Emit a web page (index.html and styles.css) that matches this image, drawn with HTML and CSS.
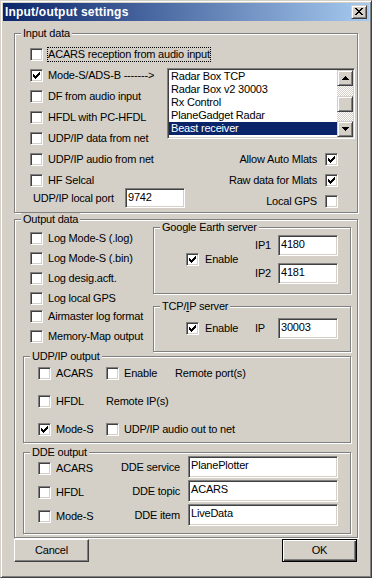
FILE: index.html
```html
<!DOCTYPE html>
<html lang="en">
<head>
    <meta charset="UTF-8">
    <meta name="viewport" content="width=device-width, initial-scale=1.0">
    <title>Input/output settings</title>
    <link rel="stylesheet" href="styles.css">
</head>
<body>
    <svg class="defs" width="0" height="0">
        <symbol id="tick" viewBox="0 0 7 7">
            <path d="M6 0h1v1h-1zM5 1h2v1h-2zM0 2h1v1h-1zM4 2h3v1h-3zM0 3h2v1h-2zM3 3h3v1h-3zM0 4h5v1h-5zM1 5h3v1h-3zM2 6h1v1h-1z"/>
        </symbol>
    </svg>

    <div class="window">
        <div class="titlebar">
            <span class="title">Input/output settings</span>
            <span class="close-btn">
                <svg width="8" height="7" viewBox="0 0 8 7" shape-rendering="crispEdges"><path d="M0 0h2v1h-2zM6 0h2v1h-2zM1 1h2v1h-2zM5 1h2v1h-2zM2 2h4v1h-4zM3 3h2v1h-2zM2 4h4v1h-4zM1 5h2v1h-2zM5 5h2v1h-2zM0 6h2v1h-2zM6 6h2v1h-2z"/></svg>
            </span>
        </div>

        <div class="dialog">
            <!-- Input data -->
            <div class="group input-group">
                <div class="group-title">Input data</div>
                <div class="input-top">
                    <div class="col input-left">
                        <label class="check"><span class="cb"></span><span class="focus">ACARS reception from audio input</span></label>
                        <label class="check"><span class="cb"><svg><use href="#tick"/></svg></span><span>Mode-S/ADS-B -------&gt;</span></label>
                        <label class="check"><span class="cb"></span><span>DF from audio input</span></label>
                        <label class="check"><span class="cb"></span><span>HFDL with PC-HFDL</span></label>
                        <label class="check"><span class="cb"></span><span>UDP/IP data from net</span></label>
                        <label class="check"><span class="cb"></span><span>UDP/IP audio from net</span></label>
                        <label class="check"><span class="cb"></span><span>HF Selcal</span></label>
                    </div>
                    <div class="input-right">
                        <div class="listbox">
                            <div class="list-items">
                                <div class="item">Radar Box TCP</div>
                                <div class="item">Radar Box v2 30003</div>
                                <div class="item">Rx Control</div>
                                <div class="item">PlaneGadget Radar</div>
                                <div class="item selected">Beast receiver</div>
                            </div>
                            <div class="scrollbar">
                                <span class="sb-btn">
                                    <svg width="7" height="4" viewBox="0 0 7 4" shape-rendering="crispEdges"><path d="M3 0h1v1h-1zM2 1h3v1h-3zM1 2h5v1h-5zM0 3h7v1h-7z"/></svg>
                                </span>
                                <span class="sb-thumb"></span>
                                <span class="sb-btn down">
                                    <svg width="7" height="4" viewBox="0 0 7 4" shape-rendering="crispEdges"><path d="M0 0h7v1h-7zM1 1h5v1h-5zM2 2h3v1h-3zM3 3h1v1h-1z"/></svg>
                                </span>
                            </div>
                        </div>
                        <div class="col mlats">
                            <label class="check rtl"><span>Allow Auto Mlats</span><span class="cb"><svg><use href="#tick"/></svg></span></label>
                            <label class="check rtl"><span>Raw data for Mlats</span><span class="cb"><svg><use href="#tick"/></svg></span></label>
                        </div>
                    </div>
                </div>
                <div class="port-row">
                    <span class="port-label">UDP/IP local port</span>
                    <div class="field port">9742</div>
                    <label class="check rtl local-gps"><span>Local GPS</span><span class="cb"></span></label>
                </div>
            </div>

            <!-- Output data -->
            <div class="group output-group">
                <div class="group-title">Output data</div>
                <div class="output-body">
                    <div class="output-top">
                        <div class="col output-left">
                            <label class="check"><span class="cb"></span><span>Log Mode-S (.log)</span></label>
                            <label class="check"><span class="cb"></span><span>Log Mode-S (.bin)</span></label>
                            <label class="check"><span class="cb"></span><span>Log desig.acft.</span></label>
                            <label class="check"><span class="cb"></span><span>Log local GPS</span></label>
                            <label class="check tight"><span class="cb"></span><span>Airmaster log format</span></label>
                            <label class="check"><span class="cb"></span><span>Memory-Map output</span></label>
                        </div>
                        <div class="output-right">
                            <div class="group ge-group">
                                <div class="group-title">Google Earth server</div>
                                <div class="ge-body">
                                    <label class="check wide"><span class="cb"><svg><use href="#tick"/></svg></span><span>Enable</span></label>
                                    <div class="ip-grid">
                                        <span class="ip-label">IP1</span>
                                        <div class="field">4180</div>
                                        <span class="ip-label">IP2</span>
                                        <div class="field">4181</div>
                                    </div>
                                </div>
                            </div>
                            <div class="group tcp-group">
                                <div class="group-title">TCP/<u>I</u>P server</div>
                                <div class="tcp-body">
                                    <label class="check wide"><span class="cb"><svg><use href="#tick"/></svg></span><span>Enable</span></label>
                                    <span class="ip-label">IP</span>
                                    <div class="field">30003</div>
                                </div>
                            </div>
                        </div>
                    </div>

                    <div class="group udp-group">
                        <div class="group-title">UDP/IP output</div>
                        <div class="udp-grid">
                            <label class="check"><span class="cb"></span><span>ACARS</span></label>
                            <div class="udp-cell">
                                <label class="check"><span class="cb"></span><span>Enable</span></label>
                                <span class="remote-port">Remote port(s)</span>
                            </div>
                            <label class="check"><span class="cb"></span><span>HFDL</span></label>
                            <span>Remote IP(s)</span>
                            <label class="check"><span class="cb"><svg><use href="#tick"/></svg></span><span>Mode-S</span></label>
                            <label class="check"><span class="cb"></span><span>UDP/IP audio out to net</span></label>
                        </div>
                    </div>

                    <div class="group dde-group">
                        <div class="group-title">DDE output</div>
                        <div class="dde-grid">
                            <label class="check"><span class="cb"></span><span>ACARS</span></label>
                            <span class="dde-label">DDE service</span>
                            <div class="field tall">PlanePlotter</div>
                            <label class="check"><span class="cb"></span><span>HFDL</span></label>
                            <span class="dde-label">DDE topic</span>
                            <div class="field tall">ACARS</div>
                            <label class="check"><span class="cb"></span><span>Mode-S</span></label>
                            <span class="dde-label">DDE item</span>
                            <div class="field tall">LiveData</div>
                        </div>
                    </div>
                </div>
            </div>

            <div class="buttons">
                <span class="btn">Cancel</span>
                <span class="btn default">OK</span>
            </div>
        </div>
    </div>
</body>
</html>
```

FILE: styles.css
```css
body {
    margin: 0;
    font-family: "Liberation Sans", Arial, sans-serif;
    font-size: 11px;
    line-height: 13px;
    letter-spacing: -0.2px;
    color: #000;
    background-color: #d4d0c8;
}

.defs {
    display: block;
    width: 0;
    height: 0;
    overflow: hidden;
}

/* window frame */
.window {
    width: 372px;
    height: 578px;
    box-sizing: border-box;
    border: 1px solid;
    border-color: #d4d0c8 #404040 #404040 #d4d0c8;
    box-shadow: inset 1px 1px #fff, inset -1px -1px #808080;
    padding: 2px;
    background-color: #d4d0c8;
}

.titlebar {
    height: 18px;
    display: flex;
    align-items: flex-start;
    justify-content: space-between;
    background: linear-gradient(to right, #0a246a, #a6caf0);
}

.title {
    color: #fff;
    font-weight: bold;
    font-size: 12px;
    letter-spacing: 0.2px;
    line-height: 18px;
    padding-left: 2px;
}

.close-btn {
    width: 16px;
    height: 14px;
    box-sizing: border-box;
    margin: 2px 2px 0 0;
    padding: 2px 0 0 3px;
    border: 1px solid;
    border-color: #d4d0c8 #404040 #404040 #d4d0c8;
    box-shadow: inset 1px 1px #fff, inset -1px -1px #808080;
    background-color: #d4d0c8;
    display: flex;
}

svg {
    display: block;
}

.dialog {
    padding: 12px 11px 0;
}

/* group boxes */
.group {
    border: 1px solid #808080;
    box-shadow: inset 1px 1px #fff, 1px 1px #fff;
}

.group-title {
    width: fit-content;
    margin: -7px 0 0 6px;
    padding: 0 2px;
    background-color: #d4d0c8;
    white-space: nowrap;
}

.col {
    display: flex;
    flex-direction: column;
    gap: 8px;
}

/* check boxes */
.check {
    display: flex;
    align-items: center;
    gap: 5px;
    height: 13px;
    white-space: nowrap;
}

.check.rtl {
    justify-content: flex-end;
    gap: 8px;
}

.check.wide {
    gap: 6px;
}

.cb {
    flex: none;
    width: 13px;
    height: 13px;
    box-sizing: border-box;
    padding: 2px;
    border: 1px solid;
    border-color: #808080 #fff #fff #808080;
    box-shadow: inset 1px 1px #404040, inset -1px -1px #d4d0c8;
    background-color: #fff;
}

.cb svg {
    width: 7px;
    height: 7px;
    shape-rendering: crispEdges;
}

.focus {
    line-height: 13px;
    margin: 0 -1px;
    border: 1px dotted #000;
}

/* text fields */
.field {
    height: 21px;
    box-sizing: border-box;
    padding: 2px 0 0 2px;
    border: 1px solid;
    border-color: #808080 #fff #fff #808080;
    box-shadow: inset 1px 1px #404040, inset -1px -1px #d4d0c8;
    background-color: #fff;
    white-space: nowrap;
}

.field.tall {
    height: 22px;
}

/* input data */
.input-group {
    padding-bottom: 4px;
}

.input-top {
    display: flex;
    align-items: flex-start;
    margin-top: 8px;
    padding-left: 15px;
}

.input-left {
    width: 137px;
    flex: none;
}

.input-right {
    width: 188px;
    flex: none;
}

.listbox {
    width: 188px;
    height: 71px;
    box-sizing: border-box;
    margin-top: 20px;
    padding: 1px;
    display: flex;
    border: 1px solid;
    border-color: #808080 #fff #fff #808080;
    box-shadow: inset 1px 1px #404040, inset -1px -1px #d4d0c8;
    background-color: #fff;
}

.list-items {
    flex: 1;
    overflow: hidden;
}

.item {
    height: 13px;
    padding-left: 2px;
    white-space: nowrap;
}

.item.selected {
    background-color: #0a246a;
    color: #fff;
}

.scrollbar {
    width: 16px;
    flex: none;
    display: flex;
    flex-direction: column;
    background: repeating-conic-gradient(#fff 0% 25%, #d4d0c8 0% 50%) 0 0 / 2px 2px;
}

.sb-btn,
.sb-thumb {
    height: 16px;
    box-sizing: border-box;
    border: 1px solid;
    border-color: #d4d0c8 #404040 #404040 #d4d0c8;
    box-shadow: inset 1px 1px #fff, inset -1px -1px #808080;
    background-color: #d4d0c8;
    display: flex;
    align-items: center;
    justify-content: center;
}

.sb-thumb {
    margin-top: 10px;
}

.sb-btn.down {
    margin-top: auto;
}

.mlats {
    margin-top: 14px;
    padding-right: 17px;
}

.port-row {
    display: flex;
    align-items: center;
    margin-top: 1px;
    padding-left: 15px;
}

.port-label {
    width: 92px;
    flex: none;
    margin-left: 3px;
}

.field.port {
    width: 60px;
    height: 20px;
}

.local-gps {
    align-self: flex-end;
    margin-left: auto;
    margin-right: 19px;
}

/* output data */
.output-group {
    margin-top: 6px;
    padding-bottom: 3px;
}

.output-body {
    padding: 0 6px 0 8px;
}

.output-top {
    display: flex;
    align-items: flex-start;
}

.output-left {
    width: 130px;
    flex: none;
    box-sizing: border-box;
    padding-left: 7px;
    margin-top: 6px;
    gap: 7px;
}

.output-left .tight {
    margin-top: -2px;
}

.output-right {
    flex: 1;
    margin-top: 1px;
}

.ge-group {
    padding-bottom: 9px;
}

.ge-body {
    display: flex;
    align-items: center;
    margin-top: 1px;
    padding: 0 12px 0 32px;
}

.ip-grid {
    margin-left: auto;
    display: grid;
    grid-template-columns: auto 60px;
    gap: 7px;
    align-items: center;
}

.ip-label {
    justify-self: end;
}

.tcp-group {
    margin-top: 12px;
    padding-bottom: 12px;
}

.tcp-body {
    display: flex;
    align-items: center;
    margin-top: 5px;
    padding: 0 12px 0 32px;
}

.tcp-body .ip-label {
    margin-left: auto;
    margin-right: 13px;
}

.tcp-body .field {
    width: 60px;
}

.udp-group {
    margin-top: 4px;
    padding-bottom: 6px;
}

.udp-grid {
    display: grid;
    grid-template-columns: 68px auto;
    row-gap: 15px;
    margin-top: 4px;
    padding-left: 14px;
}

.udp-cell {
    display: flex;
    align-items: center;
}

.remote-port {
    margin-left: 18px;
}

.dde-group {
    margin-top: 9px;
    padding-bottom: 7px;
}

.dde-grid {
    display: grid;
    grid-template-columns: 68px 1fr 150px;
    grid-auto-rows: 22px;
    column-gap: 8px;
    row-gap: 2px;
    align-items: center;
    margin-top: -3px;
    padding: 0 12px 0 14px;
}

.dde-grid .check {
    align-self: start;
    margin-top: 6px;
}

.dde-label {
    justify-self: end;
}

/* buttons */
.buttons {
    display: flex;
    justify-content: space-between;
    margin-top: 1px;
    padding-right: 1px;
}

.btn {
    width: 75px;
    height: 23px;
    box-sizing: border-box;
    display: flex;
    align-items: center;
    justify-content: center;
    border: 1px solid;
    border-color: #fff #404040 #404040 #fff;
    box-shadow: inset -1px -1px #808080;
}

.btn.default {
    border-color: #000;
    box-shadow: inset 1px 1px #fff, inset -1px -1px #404040, inset -2px -2px #808080;
}
```
